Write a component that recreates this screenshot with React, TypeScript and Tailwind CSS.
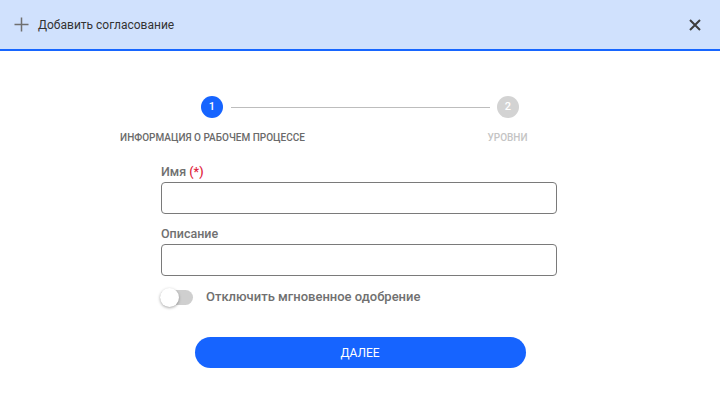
import React from "react";

export default function App() {
  return (
    <div className="w-[720px] h-[411px] bg-white overflow-hidden" style={{ fontFamily: "Roboto, 'Liberation Sans', sans-serif" }}>
      <div className="h-[51px] bg-[#d0e1fd] border-b-2 border-[#1766ff] flex items-center pl-[14px] pr-[19px]">
        <svg width="15" height="15" viewBox="0 0 15 15" className="shrink-0">
          <path d="M7.5 0.5V14.5M0.5 7.5H14.5" stroke="#6f6f6f" strokeWidth="1.5" />
        </svg>
        <span className="ml-[9px] text-[12px] text-[#333] leading-none">Добавить согласование</span>
        <div className="flex-1" />
        <svg width="12" height="12" viewBox="0 0 12 12" className="shrink-0">
          <path d="M1 1L11 11M11 1L1 11" stroke="#3d3d3d" strokeWidth="2" />
        </svg>
      </div>

      <div className="pt-[45px]">
        <div className="w-[590px] mx-auto flex items-center px-[136px]">
          <div className="w-[22px] h-[22px] rounded-full bg-[#1664ff] text-white text-[11px] font-medium flex items-center justify-center shrink-0">1</div>
          <div className="flex-1 h-px bg-[#bdbdbd] ml-[8px] mr-[7px]" />
          <div className="w-[22px] h-[22px] rounded-full bg-[#d3d3d3] text-white text-[11px] font-medium flex items-center justify-center shrink-0">2</div>
        </div>
        <div className="w-[590px] mx-auto grid grid-cols-2 mt-[14px] text-[10px] leading-[12px] font-medium uppercase">
          <div className="text-center text-[#6a6a6a]">Информация о рабочем процессе</div>
          <div className="text-center text-[#c4c4c4]">Уровни</div>
        </div>

        <div className="w-[396px] mx-auto mt-[20px] -translate-x-px">
          <div className="text-[12.5px] leading-[16px] font-medium text-[#707070]">
            Имя <span className="text-[#e0253d]">(*)</span>
          </div>
          <div className="mt-[2px] h-[32px] border border-[#7a7a7a] rounded-[4px]" />
          <div className="mt-[12px] text-[12.5px] leading-[16px] font-medium text-[#707070]">Описание</div>
          <div className="mt-[2px] h-[32px] border border-[#7a7a7a] rounded-[4px]" />
          <div className="mt-[13px] flex items-center h-[16px]">
            <div className="relative w-[33px] h-[15px] rounded-full bg-[#cfcfcf] shrink-0 ml-[-1px]">
              <div className="absolute left-0 top-[-2px] w-[19px] h-[19px] rounded-full bg-white shadow-[0_1px_3px_rgba(0,0,0,0.35)]" />
            </div>
            <span className="ml-[13px] text-[13px] font-medium text-[#707070]">Отключить мгновенное одобрение</span>
          </div>
        </div>

        <div className="flex justify-center mt-[32px]">
          <button className="w-[331px] h-[31px] rounded-full bg-[#1664ff] text-white text-[12px] font-normal uppercase">Далее</button>
        </div>
      </div>
    </div>
  );
}
